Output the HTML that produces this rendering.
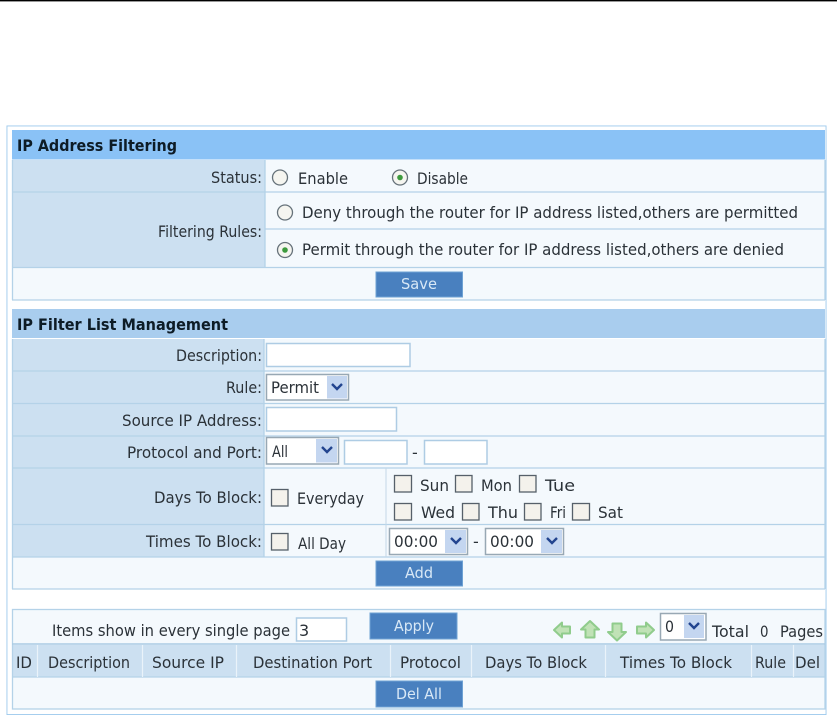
<!DOCTYPE html>
<html><head><meta charset="utf-8">
<style>
html,body{margin:0;padding:0;background:#fff;width:837px;height:716px;overflow:hidden}
svg{display:block;position:absolute;left:0;top:0}
text{font-family:"DejaVu Sans","Liberation Sans",sans-serif;font-size:16px;fill:#2c3138;stroke:none}
.b{font-weight:bold;fill:#101a26;font-size:16px}
.w{fill:#d8e8f6;font-size:15px}
.in{fill:#fff;stroke:#aecce4;stroke-width:1.5}
.sel{fill:#fff;stroke:#98a8b4;stroke-width:1.5}
.sb{fill:#c4d6f0}
.ch{fill:none;stroke:#24448f;stroke-width:2.4}
.cb{fill:#f4f2ec;stroke:#56606a;stroke-width:1.3}
.rd{fill:#f5f5f0;stroke:#66727a;stroke-width:1.3}
.dot{fill:#3c9a3c}
.btn{fill:#4a80bf;stroke:#6ea2d4;stroke-width:1}
.l{fill:#cce0f1}.v{fill:#f4f9fd}
.ln{stroke:#b4d2e8;stroke-width:1.3}
.ar{fill:#c0e2b6;stroke:#90cc8c;stroke-width:2;stroke-linejoin:round}
</style></head>
<body>
<svg width="837" height="716" viewBox="0 0 837 716" xmlns="http://www.w3.org/2000/svg">
<defs><filter id="s" x="0" y="0" width="100%" height="100%"><feGaussianBlur stdDeviation="0.35"/></filter></defs>
<rect x="0" y="0" width="837" height="1.4" fill="#000"/>
<g filter="url(#s)">
<rect x="6.500" y="125.500" width="820" height="589.500" fill="#fff" stroke="#9cc9ec" stroke-width="1.8"/>

<!-- panel 1 -->
<rect x="12" y="130" width="813" height="29.500" fill="#8ac2f6"/>
<rect x="13" y="160" width="252" height="108" class="l"/>
<rect x="265" y="160" width="560" height="108" class="v"/>
<rect x="13" y="268" width="812" height="32" class="v"/>
<line x1="12" y1="192" x2="825" y2="192" class="ln"/>
<line x1="265" y1="229" x2="825" y2="229" class="ln"/>
<line x1="12" y1="267.500" x2="825" y2="267.500" class="ln"/>
<line x1="12" y1="300" x2="825" y2="300" class="ln"/>
<line x1="265" y1="160" x2="265" y2="268" class="ln"/>
<line x1="12.500" y1="160" x2="12.500" y2="300" class="ln"/>
<line x1="825" y1="160" x2="825" y2="300" class="ln"/>
<text class="b" x="17" y="151" textLength="160" lengthAdjust="spacingAndGlyphs">IP Address Filtering</text>
<text x="211" y="183" textLength="51" lengthAdjust="spacingAndGlyphs">Status:</text>
<circle cx="280" cy="177.500" r="7.500" class="rd"/>
<text x="298" y="184" textLength="50" lengthAdjust="spacingAndGlyphs">Enable</text>
<circle cx="400" cy="177.500" r="7.500" class="rd"/><circle cx="400" cy="177.500" r="2.800" class="dot"/>
<text x="417" y="184" textLength="51" lengthAdjust="spacingAndGlyphs">Disable</text>
<text x="158" y="237" textLength="104" lengthAdjust="spacingAndGlyphs">Filtering Rules:</text>
<circle cx="285" cy="212.500" r="7.500" class="rd"/>
<text x="302" y="218" textLength="496" lengthAdjust="spacingAndGlyphs">Deny through the router for IP address listed,others are permitted</text>
<circle cx="285" cy="250" r="7.500" class="rd"/><circle cx="285" cy="250" r="2.800" class="dot"/>
<text x="302" y="255" textLength="482" lengthAdjust="spacingAndGlyphs">Permit through the router for IP address listed,others are denied</text>
<rect x="376" y="272" width="86.500" height="25" class="btn"/>
<text class="w" x="401" y="289" textLength="36" lengthAdjust="spacingAndGlyphs">Save</text>

<!-- panel 2 -->
<rect x="12" y="309" width="813" height="29" fill="#a9cdee"/>
<rect x="13" y="339" width="251" height="218" class="l"/>
<rect x="264" y="339" width="561" height="218" class="v"/>
<rect x="13" y="557" width="812" height="32" class="v"/>
<line x1="12" y1="371" x2="825" y2="371" class="ln"/>
<line x1="12" y1="403.500" x2="825" y2="403.500" class="ln"/>
<line x1="12" y1="436" x2="825" y2="436" class="ln"/>
<line x1="12" y1="468" x2="825" y2="468" class="ln"/>
<line x1="12" y1="524.500" x2="825" y2="524.500" class="ln"/>
<line x1="12" y1="557" x2="825" y2="557" class="ln"/>
<line x1="12" y1="589" x2="825" y2="589" class="ln"/>
<line x1="264" y1="339" x2="264" y2="557" class="ln"/>
<line x1="386" y1="468" x2="386" y2="557" stroke="#c4d8e8" stroke-width="1"/>
<line x1="12.500" y1="339" x2="12.500" y2="589" class="ln"/>
<line x1="825" y1="339" x2="825" y2="589" class="ln"/>
<text class="b" x="17" y="330" textLength="211" lengthAdjust="spacingAndGlyphs">IP Filter List Management</text>

<text x="176" y="361" textLength="86" lengthAdjust="spacingAndGlyphs">Description:</text>
<rect x="266.500" y="343.500" width="143.500" height="23" class="in"/>

<text x="226" y="393" textLength="36" lengthAdjust="spacingAndGlyphs">Rule:</text>
<rect x="266.500" y="374.500" width="82" height="25.500" class="sel"/>
<text x="271" y="393" textLength="48" lengthAdjust="spacingAndGlyphs">Permit</text>
<rect x="327" y="376" width="20" height="22.500" class="sb"/><path d="M332 384l5 5 5-5" class="ch"/>

<text x="122" y="426" textLength="140" lengthAdjust="spacingAndGlyphs">Source IP Address:</text>
<rect x="266.500" y="407.500" width="130" height="23.500" class="in"/>

<text x="127" y="458" textLength="135" lengthAdjust="spacingAndGlyphs">Protocol and Port:</text>
<rect x="266.500" y="437.500" width="72" height="26.500" class="sel"/>
<text x="272" y="457" textLength="16" lengthAdjust="spacingAndGlyphs">All</text>
<rect x="316" y="439" width="21" height="23.500" class="sb"/><path d="M322 447l5 5 5-5" class="ch"/>
<rect x="344.500" y="440.500" width="62.500" height="23.500" class="in"/>
<text x="412" y="458">-</text>
<rect x="424.500" y="440.500" width="62.500" height="23.500" class="in"/>

<text x="154" y="503" textLength="108" lengthAdjust="spacingAndGlyphs">Days To Block:</text>
<rect x="271.500" y="489.500" width="16.500" height="16.500" class="cb"/>
<text x="297" y="504" textLength="67" lengthAdjust="spacingAndGlyphs">Everyday</text>
<rect x="394.500" y="475.500" width="17" height="16.500" class="cb"/>
<text x="420" y="491" textLength="29" lengthAdjust="spacingAndGlyphs">Sun</text>
<rect x="455.500" y="475.500" width="16.500" height="16.500" class="cb"/>
<text x="481" y="491" textLength="31" lengthAdjust="spacingAndGlyphs">Mon</text>
<rect x="519.500" y="475.500" width="16.500" height="16.500" class="cb"/>
<text x="545" y="491" textLength="30" lengthAdjust="spacingAndGlyphs">Tue</text>
<rect x="394.500" y="503.500" width="17" height="16.500" class="cb"/>
<text x="421" y="518" textLength="34" lengthAdjust="spacingAndGlyphs">Wed</text>
<rect x="462.500" y="503.500" width="16.500" height="16.500" class="cb"/>
<text x="488" y="518" textLength="30" lengthAdjust="spacingAndGlyphs">Thu</text>
<rect x="524.500" y="503.500" width="16.500" height="16.500" class="cb"/>
<text x="550" y="518" textLength="16" lengthAdjust="spacingAndGlyphs">Fri</text>
<rect x="572.500" y="503.500" width="17" height="16.500" class="cb"/>
<text x="598" y="518" textLength="25" lengthAdjust="spacingAndGlyphs">Sat</text>

<text x="146" y="547" textLength="116" lengthAdjust="spacingAndGlyphs">Times To Block:</text>
<rect x="271.500" y="533.500" width="16.500" height="16.500" class="cb"/>
<text x="298" y="549" textLength="48" lengthAdjust="spacingAndGlyphs">All Day</text>
<rect x="389.500" y="528.500" width="78" height="26" class="sel"/>
<text x="394" y="547" textLength="44" lengthAdjust="spacingAndGlyphs">00:00</text>
<rect x="445" y="530" width="21" height="23" class="sb"/><path d="M451 538l5 5 5-5" class="ch"/>
<text x="473" y="547">-</text>
<rect x="485.500" y="528.500" width="78" height="26" class="sel"/>
<text x="490" y="547" textLength="44" lengthAdjust="spacingAndGlyphs">00:00</text>
<rect x="541" y="530" width="21" height="23" class="sb"/><path d="M547 538l5 5 5-5" class="ch"/>

<rect x="376" y="561" width="86.500" height="25" class="btn"/>
<text class="w" x="405" y="578" textLength="28" lengthAdjust="spacingAndGlyphs">Add</text>

<!-- panel 3 -->
<rect x="13" y="610" width="812" height="99" class="v"/>
<rect x="13" y="645" width="812" height="32" class="l"/>
<rect x="12.500" y="609.500" width="812.500" height="99.500" fill="none" stroke="#b4d2e8" stroke-width="1.3"/>
<line x1="12" y1="644" x2="825" y2="644" stroke="#a9cbe4" stroke-width="1.5"/>
<line x1="12" y1="677" x2="825" y2="677" class="ln"/>
<g stroke="#eaf3fa" stroke-width="1.2">
<line x1="37.500" y1="645" x2="37.500" y2="677"/>
<line x1="142.500" y1="645" x2="142.500" y2="677"/>
<line x1="236.500" y1="645" x2="236.500" y2="677"/>
<line x1="390.500" y1="645" x2="390.500" y2="677"/>
<line x1="471.500" y1="645" x2="471.500" y2="677"/>
<line x1="605.500" y1="645" x2="605.500" y2="677"/>
<line x1="751.500" y1="645" x2="751.500" y2="677"/>
<line x1="793.500" y1="645" x2="793.500" y2="677"/>
</g>
<text x="52" y="636" textLength="238" lengthAdjust="spacingAndGlyphs">Items show in every single page</text>
<rect x="296.500" y="618" width="50" height="23" class="in"/>
<text x="299" y="636">3</text>
<rect x="370" y="613" width="87" height="26" class="btn"/>
<text class="w" x="394" y="631" textLength="40" lengthAdjust="spacingAndGlyphs">Apply</text>

<path d="M554 630l8-7.500v4h8v7h-8v4z" class="ar"/>
<path d="M590 621l9 8.500h-4.500v8h-9v-8h-4.500z" class="ar"/>
<path d="M617 640.500l-9-8.500h4.500v-8.500h9v8.500h4.500z" class="ar"/>
<path d="M654 630l-8-7.500v4h-9v7h9v4z" class="ar"/>

<rect x="660.500" y="613.500" width="45.500" height="26.500" class="sel"/>
<text x="665" y="632" textLength="9" lengthAdjust="spacingAndGlyphs">0</text>
<rect x="684" y="615" width="20" height="23" class="sb"/><path d="M689 623l5 5 5-5" class="ch"/>
<text x="712" y="637" textLength="37" lengthAdjust="spacingAndGlyphs">Total</text>
<text x="760" y="637" textLength="8.500" lengthAdjust="spacingAndGlyphs">0</text>
<text x="780" y="637" textLength="43" lengthAdjust="spacingAndGlyphs">Pages</text>

<text x="16" y="668" textLength="16" lengthAdjust="spacingAndGlyphs">ID</text>
<text x="48" y="668" textLength="82" lengthAdjust="spacingAndGlyphs">Description</text>
<text x="152" y="668" textLength="72" lengthAdjust="spacingAndGlyphs">Source IP</text>
<text x="253" y="668" textLength="119" lengthAdjust="spacingAndGlyphs">Destination Port</text>
<text x="400" y="668" textLength="61" lengthAdjust="spacingAndGlyphs">Protocol</text>
<text x="485" y="668" textLength="102" lengthAdjust="spacingAndGlyphs">Days To Block</text>
<text x="620" y="668" textLength="112" lengthAdjust="spacingAndGlyphs">Times To Block</text>
<text x="755" y="668" textLength="31" lengthAdjust="spacingAndGlyphs">Rule</text>
<text x="795" y="668" textLength="25" lengthAdjust="spacingAndGlyphs">Del</text>
<rect x="376" y="681" width="86.500" height="26" class="btn"/>
<text class="w" x="396" y="699" textLength="46" lengthAdjust="spacingAndGlyphs">Del All</text>
</g>
</svg>
</body></html>
